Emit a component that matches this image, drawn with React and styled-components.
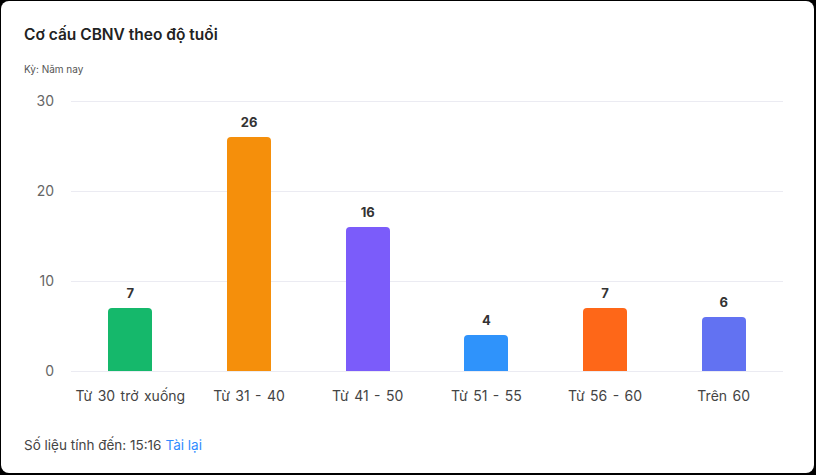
import React from 'react';
import styled, { createGlobalStyle } from 'styled-components';

const GlobalStyle = createGlobalStyle`
  html, body {
    margin: 0;
    padding: 0;
    background: #000;
  }
  body {
    font-family: Inter, "Noto Sans", "Liberation Sans", sans-serif;
  }
`;

const Card = styled.div`
  box-sizing: border-box;
  margin: 1px 0 0 1px;
  width: 813px;
  height: 472px;
  background: #fff;
  border-radius: 8px;
  padding: 24px 31px 0 23px;
  display: flex;
  flex-direction: column;
`;

const Title = styled.h2`
  margin: 0;
  font-size: 15.5px;
  line-height: 20px;
  font-weight: 600;
  color: #222;
`;

const Period = styled.div`
  margin-top: 16px;
  font-size: 10px;
  line-height: 16px;
  color: #555;
`;

const Chart = styled.div`
  margin-top: 24px;
  display: flex;
`;

const YAxis = styled.div`
  width: 47px;
  display: flex;
  flex-direction: column;
  gap: 70px;
  margin-top: -10px;
`;

const Tick = styled.div`
  height: 20px;
  line-height: 20px;
  font-size: 14px;
  color: #666;
  text-align: right;
  padding-right: 17px;
`;

const PlotColumn = styled.div`
  flex: 1;
  display: flex;
  flex-direction: column;
`;

const Plot = styled.div`
  height: 271px;
  background: repeating-linear-gradient(
    to bottom,
    #ebebf2 0,
    #ebebf2 1px,
    transparent 1px,
    transparent 90px
  );
  display: flex;
`;

const Slot = styled.div`
  flex: 1;
  height: 270px;
  display: flex;
  flex-direction: column;
  align-items: center;
  justify-content: flex-end;
`;

const Value = styled.div`
  font-size: 13px;
  line-height: 16px;
  font-weight: 700;
  color: #333;
  margin-bottom: 7px;
`;

const Bar = styled.div`
  width: 44px;
  background: ${(p) => p.$color};
  border-radius: 4px 4px 0 0;
`;

const Labels = styled.div`
  display: flex;
  margin-top: 14px;
`;

const Label = styled.div`
  flex: 1;
  text-align: center;
  font-size: 14px;
  line-height: 20px;
  word-spacing: 1.5px;
  color: #444;
  white-space: nowrap;
`;

const Footer = styled.div`
  margin-top: 30px;
  font-size: 13.5px;
  line-height: 18px;
  color: #444;
`;

const Reload = styled.a`
  color: #2f8cff;
  cursor: pointer;
  margin-left: 4px;
`;

const data = [
  { label: 'Từ 30 trở xuống', value: 7, color: '#15b86b' },
  { label: 'Từ 31 - 40', value: 26, color: '#f58f0b' },
  { label: 'Từ 41 - 50', value: 16, color: '#7b5cfa' },
  { label: 'Từ 51 - 55', value: 4, color: '#2f93fb' },
  { label: 'Từ 56 - 60', value: 7, color: '#fe6718' },
  { label: 'Trên 60', value: 6, color: '#6272f2' },
];

const MAX = 30;

export default function App() {
  return (
    <>
      <GlobalStyle />
      <Card>
        <Title>Cơ cấu CBNV theo độ tuổi</Title>
        <Period>Kỳ: Năm nay</Period>
        <Chart>
          <YAxis>
            {[30, 20, 10, 0].map((t) => (
              <Tick key={t}>{t}</Tick>
            ))}
          </YAxis>
          <PlotColumn>
            <Plot>
              {data.map((d) => (
                <Slot key={d.label}>
                  <Value>{d.value}</Value>
                  <Bar $color={d.color} style={{ height: (d.value / MAX) * 270 }} />
                </Slot>
              ))}
            </Plot>
            <Labels>
              {data.map((d) => (
                <Label key={d.label}>{d.label}</Label>
              ))}
            </Labels>
          </PlotColumn>
        </Chart>
        <Footer>
          Số liệu tính đến: 15:16<Reload>Tài lại</Reload>
        </Footer>
      </Card>
    </>
  );
}
